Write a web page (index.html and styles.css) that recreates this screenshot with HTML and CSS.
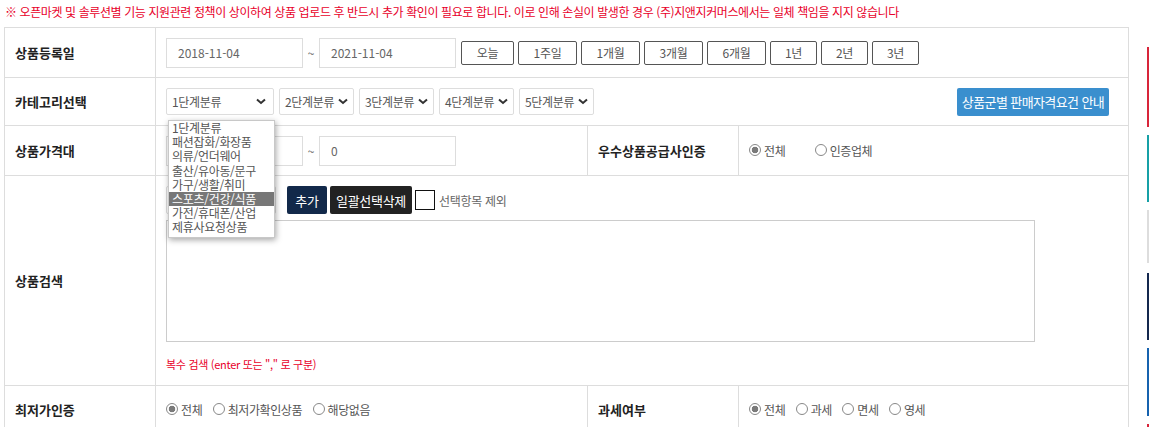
FILE: index.html
```html
<!DOCTYPE html>
<html lang="ko">
<head>
  <meta charset="UTF-8" />
  <meta name="viewport" content="width=device-width, initial-scale=1.0"/>
  <title>상품 검색</title>
  <link rel="stylesheet" href="styles.css">
</head>
<body>
  <div class="page">
    <div class="content">
      <p class="notice">※ 오픈마켓 및 솔루션별 기능 지원관련 정책이 상이하여 상품 업로드 후 반드시 추가 확인이 필요로 합니다. 이로 인해 손실이 발생한 경우 (주)지앤지커머스에서는 일체 책임을 지지 않습니다</p>

      <table class="search-table">
        <colgroup>
          <col class="col-label">
          <col class="col-value">
          <col class="col-label">
          <col>
        </colgroup>
        <tr class="row-date">
          <th>상품등록일</th>
          <td colspan="3">
            <div class="field-line">
              <input type="text" class="text-input" value="2018-11-04" />
              <span class="tilde">~</span>
              <input type="text" class="text-input" value="2021-11-04" />
              <div class="period-btns">
                <button class="period-btn today">오늘</button>
                <button class="period-btn">1주일</button>
                <button class="period-btn">1개월</button>
                <button class="period-btn">3개월</button>
                <button class="period-btn">6개월</button>
                <button class="period-btn short">1년</button>
                <button class="period-btn short">2년</button>
                <button class="period-btn short">3년</button>
              </div>
            </div>
          </td>
        </tr>
        <tr class="row-category">
          <th>카테고리선택</th>
          <td colspan="3">
            <div class="field-line spread">
              <div class="select-group">
                <div class="select wide is-open">
                  <span>1단계분류</span>
                  <svg class="chevron" width="10" height="7" viewBox="0 0 10 7"><polyline points="1,1.5 5,5 9,1.5" fill="none" stroke="#333" stroke-width="2"/></svg>
                  <ul class="select-list">
                    <li>1단계분류</li>
                    <li>패션잡화/화장품</li>
                    <li>의류/언더웨어</li>
                    <li>출산/유아동/문구</li>
                    <li>가구/생활/취미</li>
                    <li class="active">스포츠/건강/식품</li>
                    <li>가전/휴대폰/산업</li>
                    <li>제휴사요청상품</li>
                  </ul>
                </div>
                <div class="select">
                  <span>2단계분류</span>
                  <svg class="chevron" width="10" height="7" viewBox="0 0 10 7"><polyline points="1,1.5 5,5 9,1.5" fill="none" stroke="#333" stroke-width="2"/></svg>
                </div>
                <div class="select">
                  <span>3단계분류</span>
                  <svg class="chevron" width="10" height="7" viewBox="0 0 10 7"><polyline points="1,1.5 5,5 9,1.5" fill="none" stroke="#333" stroke-width="2"/></svg>
                </div>
                <div class="select">
                  <span>4단계분류</span>
                  <svg class="chevron" width="10" height="7" viewBox="0 0 10 7"><polyline points="1,1.5 5,5 9,1.5" fill="none" stroke="#333" stroke-width="2"/></svg>
                </div>
                <div class="select">
                  <span>5단계분류</span>
                  <svg class="chevron" width="10" height="7" viewBox="0 0 10 7"><polyline points="1,1.5 5,5 9,1.5" fill="none" stroke="#333" stroke-width="2"/></svg>
                </div>
              </div>
              <button class="info-btn">상품군별 판매자격요건 안내</button>
            </div>
          </td>
        </tr>
        <tr class="row-price">
          <th>상품가격대</th>
          <td>
            <div class="field-line">
              <input type="text" class="text-input" value="0" />
              <span class="tilde">~</span>
              <input type="text" class="text-input" value="0" />
            </div>
          </td>
          <th>우수상품공급사인증</th>
          <td>
            <label class="radio wide-gap"><input type="radio" name="cert" checked> 전체</label>
            <label class="radio"><input type="radio" name="cert"> 인증업체</label>
          </td>
        </tr>
        <tr class="row-search">
          <th>상품검색</th>
          <td colspan="3">
            <div class="field-line">
              <div class="select search-type">
                <span>상품명</span>
                <svg class="chevron" width="10" height="7" viewBox="0 0 10 7"><polyline points="1,1.5 5,5 9,1.5" fill="none" stroke="#333" stroke-width="2"/></svg>
              </div>
              <button class="dark-btn navy">추가</button>
              <button class="dark-btn black">일괄선택삭제</button>
              <label class="check"><input type="checkbox"> 선택항목 제외</label>
            </div>
            <textarea class="search-area"></textarea>
            <p class="search-help">복수 검색 (enter 또는 "," 로 구분)</p>
          </td>
        </tr>
        <tr class="row-last">
          <th>최저가인증</th>
          <td>
            <label class="radio"><input type="radio" name="lowest" checked> 전체</label>
            <label class="radio"><input type="radio" name="lowest"> 최저가확인상품</label>
            <label class="radio"><input type="radio" name="lowest"> 해당없음</label>
          </td>
          <th>과세여부</th>
          <td>
            <label class="radio"><input type="radio" name="tax" checked> 전체</label>
            <label class="radio"><input type="radio" name="tax"> 과세</label>
            <label class="radio"><input type="radio" name="tax"> 면세</label>
            <label class="radio"><input type="radio" name="tax"> 영세</label>
          </td>
        </tr>
      </table>
    </div>

    <div class="rail">
      <span class="rail-seg red"></span>
      <span class="rail-seg teal"></span>
      <span class="rail-seg gray"></span>
      <span class="rail-seg navy"></span>
      <span class="rail-seg blue"></span>
      <span class="rail-seg red last"></span>
    </div>
  </div>
</body>
</html>
```

FILE: styles.css
```css
* {
  box-sizing: border-box;
}

body {
  margin: 0;
  background: #fff;
  color: #555;
  font-family: "Noto Sans CJK KR", "Noto Sans", sans-serif;
  font-size: 12px;
  font-feature-settings: "palt";
  overflow: hidden;
}

.page {
  display: flex;
  padding-left: 4px;
}

.content {
  width: 1125px;
}

/* notice */
.notice {
  margin: 0;
  padding: 4px 1px 7px;
  line-height: 16px;
  letter-spacing: -0.4px;
  color: #e8002a;
}

/* table */
.search-table {
  width: 100%;
  border-collapse: collapse;
  table-layout: fixed;
  border: 1px solid #ddd;
}

.col-label {
  width: 151px;
}

.col-value {
  width: 432px;
}

.search-table th,
.search-table td {
  border: 1px solid #ddd;
  padding: 0 10px;
  text-align: left;
  vertical-align: middle;
}

.search-table th {
  font-size: 13px;
  font-weight: 700;
  color: #222;
}

.row-date th, .row-date td { height: 50px; }
.row-category th, .row-category td { height: 48px; padding-right: 19px; }
.row-price th, .row-price td { height: 50px; }
.row-search th, .row-search td { height: 210px; }
.row-last th, .row-last td { height: 48px; }

.row-search td {
  padding-top: 10px;
  vertical-align: top;
}

.field-line {
  display: flex;
  align-items: center;
}

.field-line.spread {
  justify-content: space-between;
}

.text-input {
  width: 137px;
  height: 30px;
  border: 1px solid #ddd;
  padding: 0 11px;
  font: inherit;
  color: #666;
  outline: none;
}

.tilde {
  width: 16px;
  text-align: center;
  color: #666;
}

/* period buttons */
.period-btns {
  display: flex;
  gap: 4px;
  margin-left: 5px;
}

.period-btn {
  width: 59px;
  height: 24px;
  padding: 0;
  border: 1px solid #555;
  border-radius: 2px;
  background: #fff;
  color: #555;
  font: inherit;
  letter-spacing: -0.3px;
}

.period-btn.today { width: 53px; }
.period-btn.short { width: 47px; }

/* fake selects */
.select-group {
  display: flex;
  gap: 5px;
}

.select {
  position: relative;
  display: flex;
  align-items: center;
  justify-content: space-between;
  width: 75px;
  height: 27px;
  padding: 0 5px;
  border: 1px solid #ddd;
  border-radius: 2px;
  background: #fff;
  color: #555;
  letter-spacing: -0.3px;
}

.select.wide {
  width: 108px;
  padding-right: 7px;
}

.chevron {
  flex: none;
}

.select-list {
  position: absolute;
  top: 31px;
  left: 1px;
  z-index: 10;
  width: 107px;
  margin: 0;
  padding: 0 0 2px;
  list-style: none;
  background: #fff;
  border: 1px solid #c8c8c8;
  box-shadow: 1px 2px 6px rgba(0, 0, 0, 0.35);
}

.select-list li {
  height: 14.2px;
  line-height: 14px;
  padding-left: 3px;
  color: #555;
  white-space: nowrap;
  letter-spacing: -0.3px;
}

.select-list li.active {
  background: #777;
  color: #fff;
}

.info-btn {
  width: 152px;
  height: 28px;
  padding: 0;
  border: none;
  border-radius: 2px;
  background: #3a8fce;
  color: #fff;
  font: inherit;
  font-size: 13px;
  letter-spacing: -0.6px;
}

/* search row */
.select.search-type {
  width: 110px;
  height: 28px;
}

.dark-btn {
  height: 28px;
  padding: 0;
  border: none;
  border-radius: 2px;
  color: #fff;
  font: inherit;
  font-size: 13px;
  letter-spacing: -0.3px;
}

.dark-btn.navy {
  width: 40px;
  margin-left: 11px;
  background: #12294a;
}

.dark-btn.black {
  width: 82px;
  margin-left: 3px;
  background: #222;
}

.check {
  display: flex;
  align-items: center;
  gap: 4px;
  margin-left: 3px;
  color: #666;
  letter-spacing: -0.3px;
}

.check input {
  appearance: none;
  width: 20px;
  height: 20px;
  margin: 0;
  border: 1px solid #111;
  background: #fff;
}

.search-area {
  display: block;
  width: 869px;
  height: 122px;
  margin-top: 6px;
  border: 1px solid #ccc;
  resize: none;
}

.search-help {
  margin: 14px 0 0;
  color: #e8002a;
  font-size: 11px;
  letter-spacing: -0.3px;
}

/* radios */
.radio {
  display: inline-flex;
  align-items: center;
  gap: 3px;
  margin-right: 7px;
  color: #555;
  letter-spacing: -0.4px;
}

.radio.wide-gap {
  margin-right: 26px;
}

.radio input {
  appearance: none;
  width: 12px;
  height: 12px;
  margin: 0;
  border: 1px solid #888;
  border-radius: 50%;
  background: #fff;
}

.radio input:checked {
  background: radial-gradient(circle, #7a7a7a 0 3px, #fff 3.6px);
}

/* right rail */
.rail {
  display: flex;
  flex-direction: column;
  width: 2px;
  margin-left: 18px;
  padding-top: 47px;
}

.rail-seg {
  display: block;
  width: 2px;
  height: 67px;
  margin-bottom: 8px;
}

.rail-seg.red { background: #d8253a; height: 80px; }
.rail-seg.teal { background: #16a0a6; }
.rail-seg.gray { background: #ddd; height: 53px; margin-bottom: 10px; }
.rail-seg.navy { background: #14284e; }
.rail-seg.blue { background: #1662ae; height: 68px; }
.rail-seg.last { height: 10px; }
```
